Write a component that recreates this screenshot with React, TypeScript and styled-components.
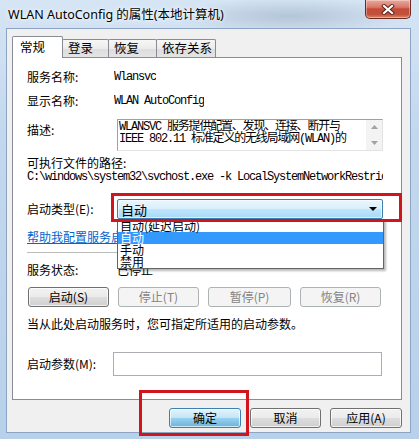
import React from 'react';
import styled, { createGlobalStyle } from 'styled-components';

const Global = createGlobalStyle`
  html, body { margin: 0; padding: 0; }
  body {
    width: 419px; height: 439px; overflow: hidden;
    background: #c9dcf0;
    font-family: "Noto Sans CJK SC", "Noto Sans", sans-serif;
    color: #000;
  }
`;

const Window = styled.div`
  position: relative;
  width: 419px; height: 439px;
  box-sizing: border-box;
  display: flex; flex-direction: column;
  padding: 0 8px 6px 6px;
  background:
    radial-gradient(ellipse 120px 18px at 290px 16px, rgba(120,140,165,0.35), rgba(120,140,165,0) 100%),
    linear-gradient(180deg, #d6e5f4 0%, #c3d8ee 30%, #b8d0ea 100%);
`;

const TitleBar = styled.div`
  height: 28px; flex: none;
  display: flex; align-items: flex-start;
`;

const Title = styled.div`
  margin: 7px 0 0 2px;
  font-family: "Noto Sans", "Noto Sans CJK SC", sans-serif;
  font-size: 12.5px; line-height: 15px;
  color: #000;
  text-shadow: 0 0 6px rgba(255,255,255,0.9), 0 0 3px rgba(255,255,255,0.9);
`;

const CloseBtn = styled.div`
  margin-left: auto;
  width: 46px; height: 19px; box-sizing: border-box;
  border: 1px solid #6b2a22; border-top: none;
  border-radius: 0 0 5px 5px;
  background: linear-gradient(180deg, #e9a99a 0%, #d9786a 40%, #c44a38 50%, #c2503b 80%, #d98a6a 100%);
  box-shadow: inset 0 0 0 1px rgba(255,255,255,0.35);
  display: flex; align-items: center; justify-content: center;
`;

const Client = styled.div`
  flex: 1;
  background: #f0f0f0;
  border: 1px solid #8da5c4;
  display: flex; flex-direction: column;
  padding: 7px 8px 0 5px;
`;

const TabRow = styled.div`
  height: 21px; flex: none;
  display: flex; align-items: flex-end;
`;

const Tab = styled.div<{ $w: number; $active?: boolean }>`
  position: relative;
  z-index: ${p => (p.$active ? 2 : 1)};
  width: ${p => p.$w}px; box-sizing: border-box;
  height: ${p => (p.$active ? 22 : 18)}px;
  margin-bottom: ${p => (p.$active ? -1 : 0)}px;
  margin-left: -1px;
  &:first-child { margin-left: 0; }
  border: 1px solid #898c95; border-bottom: none;
  border-radius: 2px 2px 0 0;
  background: ${p => (p.$active ? '#ffffff' : 'linear-gradient(180deg, #f7f7f7 0%, #ececec 50%, #dddddd 51%, #e4e4e4 100%)')};
  padding-left: ${p => (p.$active ? 7 : 5)}px;
  font-size: 12.5px;
  line-height: ${p => (p.$active ? 19 : 16)}px;
`;

const Panel = styled.div`
  position: relative;
  z-index: 1;
  height: 343px; box-sizing: border-box; flex: none;
  background: #fff;
  border: 1px solid #898c95;
  padding: 0 18px 0 14px;
  display: flex; flex-direction: column;
`;

const Row = styled.div<{ $mt: number; $h: number; $top?: boolean }>`
  display: flex;
  align-items: ${p => (p.$top ? 'flex-start' : 'center')};
  margin-top: ${p => p.$mt}px;
  height: ${p => p.$h}px;
  flex: none;
`;

const Label = styled.div<{ $w?: number; $pt?: number }>`
  width: ${p => (p.$w ? `${p.$w}px` : 'auto')};
  flex: none;
  padding-top: ${p => p.$pt || 0}px;
  font-size: 12px; line-height: 16px;
  white-space: nowrap;
`;

const Mono = styled.div`
  font-family: "Liberation Mono", "Noto Sans CJK SC", monospace;
  font-size: 12px; letter-spacing: -1.2px;
  line-height: 13px;
  white-space: nowrap; overflow: hidden;
`;

const DescBox = styled.div`
  width: 266px; height: 32px; box-sizing: border-box;
  border: 1px solid #e3e3e3;
  border-top-color: #a0a0a0; border-left-color: #a0a0a0;
  display: flex;
  background: #fff;
`;

const DescText = styled(Mono)`
  flex: 1;
  padding: 1px 0 0 1px;
  line-height: 12px;
`;

const ScrollBar = styled.div`
  width: 16px; flex: none;
  background: #f3f3f3;
  display: flex; flex-direction: column; justify-content: space-between;
  align-items: center;
  padding: 5px 0 5px;
  box-sizing: border-box;
`;

const Combo = styled.div`
  width: 266px; height: 20px; box-sizing: border-box;
  border: 1px solid #3c7fb1; border-radius: 2px;
  background: linear-gradient(180deg, #eaf6fd 0%, #d9f0fc 48%, #bee6fd 52%, #a7d9f5 100%);
  box-shadow: inset 0 0 0 1px rgba(255,255,255,0.6);
  display: flex; align-items: center;
  padding: 0 5px 0 3px;
  font-size: 13px;
`;

const ComboArrow = styled.div`
  margin-left: auto;
  width: 0; height: 0;
  border-left: 4px solid transparent; border-right: 4px solid transparent;
  border-top: 4px solid #000;
`;

const Link = styled.div`
  font-size: 12px; line-height: 16px;
  color: #0066cc; text-decoration: underline;
  white-space: nowrap;
`;

const Separator = styled.div`
  height: 1px; flex: none;
  margin-top: 7px;
  background: #bcbcbc;
`;

const Value = styled.div`
  font-size: 12px; line-height: 16px;
`;

const BtnRow = styled.div<{ $mt: number }>`
  display: flex; gap: 9px;
  margin-top: ${p => p.$mt}px;
  margin-left: 1px;
  flex: none;
`;

const Button = styled.div<{ $w: number; $disabled?: boolean; $default?: boolean }>`
  width: ${p => p.$w}px; height: 20px; box-sizing: border-box;
  border: 1px solid ${p => (p.$default ? '#3c7fb1' : p.$disabled ? '#adb2b5' : '#707070')};
  border-radius: 3px;
  background: ${p =>
    p.$default
      ? 'linear-gradient(180deg, #e5f4fc 0%, #c4e5f6 48%, #98d1ef 52%, #68b3db 100%)'
      : p.$disabled
        ? '#f4f4f4'
        : 'linear-gradient(180deg, #f2f2f2 0%, #ebebeb 48%, #dddddd 52%, #cfcfcf 100%)'};
  box-shadow: inset 0 0 0 1px ${p => (p.$disabled ? 'rgba(255,255,255,0)' : 'rgba(255,255,255,0.7)')};
  color: ${p => (p.$disabled ? '#838383' : '#000')};
  font-size: 12px; line-height: 18px;
  text-align: center;
`;

const Param = styled.div`
  width: 269px; height: 24px; box-sizing: border-box;
  border: 1px solid #abadb3;
  background: #fff;
`;

const BottomRow = styled.div`
  display: flex; justify-content: flex-end; gap: 9px;
  margin-top: 8px;
`;

const RedBox = styled.div<{ $x: number; $y: number; $w: number; $h: number }>`
  position: absolute;
  z-index: 5;
  left: ${p => p.$x}px; top: ${p => p.$y}px;
  width: ${p => p.$w}px; height: ${p => p.$h}px;
  box-sizing: border-box;
  border: 3px solid #d0161c;
  pointer-events: none;
`;

const DropList = styled.div`
  position: absolute;
  z-index: 4;
  left: 104px; top: 161px;
  width: 267px; height: 50px; box-sizing: border-box;
  border: 1px solid #646464;
  background: #fff;
  box-shadow: 2px 2px 2px rgba(0,0,0,0.28);
`;

const DropItem = styled.div<{ $sel?: boolean }>`
  height: 12px;
  padding-left: 2px;
  font-size: 12px; line-height: 12px;
  white-space: nowrap;
  background: ${p => (p.$sel ? '#3399ff' : 'transparent')};
  color: ${p => (p.$sel ? '#fff' : '#000')};
`;

const tabs = [
  { label: '常规', w: 51, active: true },
  { label: '登录', w: 47 },
  { label: '恢复', w: 49 },
  { label: '依存关系', w: 60 },
];

const svcButtons = [
  { label: '启动(S)', w: 81 },
  { label: '停止(T)', w: 81, disabled: true },
  { label: '暂停(P)', w: 83, disabled: true },
  { label: '恢复(R)', w: 81, disabled: true },
];

const ArrowUp = () => (
  <svg width="7" height="4" viewBox="0 0 7 4"><path d="M0 4 L3.5 0 L7 4 Z" fill="#a2a2a2" /></svg>
);
const ArrowDown = () => (
  <svg width="7" height="4" viewBox="0 0 7 4"><path d="M0 0 L3.5 4 L7 0 Z" fill="#a2a2a2" /></svg>
);

export default function App() {
  return (
    <>
      <Global />
      <Window>
        <TitleBar>
          <Title>WLAN AutoConfig 的属性(本地计算机)</Title>
          <CloseBtn>
            <svg width="14" height="11" viewBox="0 0 14 11">
              <path d="M3 2 L11 9 M11 2 L3 9" stroke="#5a2018" strokeWidth="4" strokeLinecap="square" />
              <path d="M3 2 L11 9 M11 2 L3 9" stroke="#ffffff" strokeWidth="2.2" strokeLinecap="square" />
            </svg>
          </CloseBtn>
        </TitleBar>
        <Client>
          <TabRow>
            {tabs.map(t => (
              <Tab key={t.label} $w={t.w} $active={t.active}>{t.label}</Tab>
            ))}
          </TabRow>
          <Panel>
            <Row $mt={11} $h={16}>
              <Label $w={87}>服务名称:</Label>
              <Mono>Wlansvc</Mono>
            </Row>
            <Row $mt={8} $h={16}>
              <Label $w={87}>显示名称:</Label>
              <Mono>WLAN AutoConfig</Mono>
            </Row>
            <Row $mt={10} $h={32} $top>
              <Label $w={90} $pt={3}>描述:</Label>
              <DescBox>
                <DescText>
                  WLANSVC 服务提供配置、发现、连接、断开与<br />
                  IEEE 802.11 标准定义的无线局域网(WLAN)的
                </DescText>
                <ScrollBar>
                  <ArrowUp />
                  <ArrowDown />
                </ScrollBar>
              </DescBox>
            </Row>
            <Row $mt={4} $h={16}>
              <Label>可执行文件的路径:</Label>
            </Row>
            <Row $mt={0} $h={13}>
              <Mono>C:\windows\system32\svchost.exe -k LocalSystemNetworkRestric</Mono>
            </Row>
            <Row $mt={15} $h={20}>
              <Label $w={90}>启动类型(E):</Label>
              <Combo>
                自动
                <ComboArrow />
              </Combo>
            </Row>
            <Row $mt={10} $h={16}>
              <Link>帮助我配置服务启动选项。</Link>
            </Row>
            <Separator />
            <Row $mt={9} $h={16}>
              <Label $w={90}>服务状态:</Label>
              <Value>已停止</Value>
            </Row>
            <BtnRow $mt={9}>
              {svcButtons.map(b => (
                <Button key={b.label} $w={b.w} $disabled={b.disabled}>{b.label}</Button>
              ))}
            </BtnRow>
            <Row $mt={9} $h={16}>
              <Label>当从此处启动服务时，您可指定所适用的启动参数。</Label>
            </Row>
            <Row $mt={20} $h={24}>
              <Label $w={86}>启动参数(M):</Label>
              <Param />
            </Row>
            <DropList>
              <DropItem>自动(延迟启动)</DropItem>
              <DropItem $sel>自动</DropItem>
              <DropItem>手动</DropItem>
              <DropItem>禁用</DropItem>
            </DropList>
            <RedBox $x={98} $y={135} $w={291} $h={29} />
          </Panel>
          <BottomRow>
            <Button $w={72} $default>确定</Button>
            <Button $w={71}>取消</Button>
            <Button $w={72}>应用(A)</Button>
          </BottomRow>
        </Client>
        <RedBox $x={139} $y={390} $w={110} $h={46} />
      </Window>
    </>
  );
}
